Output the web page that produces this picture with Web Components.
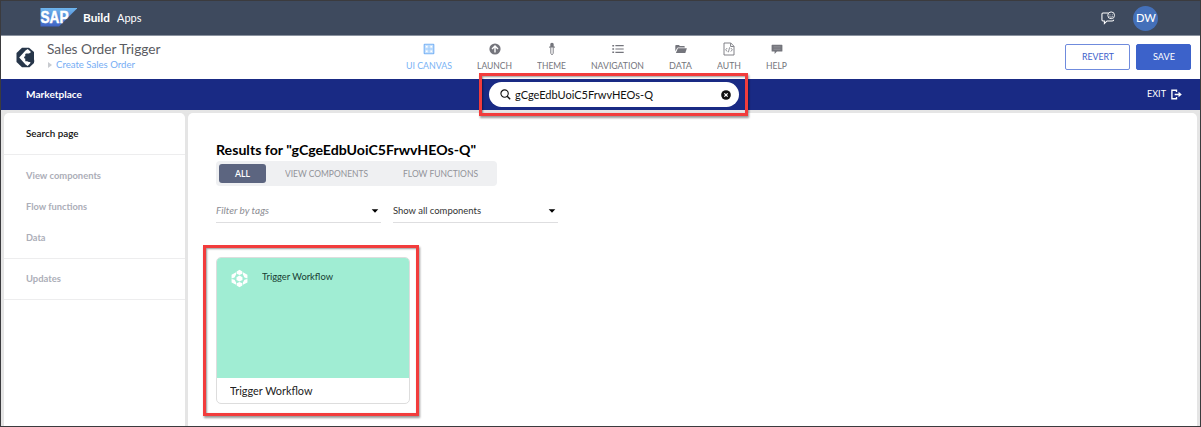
<!DOCTYPE html>
<html lang="en"><head><meta charset="utf-8"><title>Marketplace</title>
<style>html,body{margin:0;height:100%;overflow:hidden}body{font-family:Lato,"Open Sans",sans-serif;background:#3c3c40}</style></head>
<body><build-app></build-app>
<script>
const define=(name,html,setup)=>customElements.define(name,class extends HTMLElement{
  constructor(){super();const t=document.createElement('template');t.innerHTML=html;this.attachShadow({mode:'open'}).append(t.content.cloneNode(true));}
  connectedCallback(){if(setup)setup.call(this)}
});
// A label whose glyphs are widened so that the text spans the width "w".
define('fit-text',`<style>:host{display:block;white-space:nowrap;line-height:1.2;flex:none}span{display:inline-block;transform-origin:0 50%}</style><span><slot></slot></span>`,function(){
  const w=+this.getAttribute('w'),s=this.shadowRoot.querySelector('span');
  this.style.width=w+'px';s.style.transform='none';
  s.style.transform='scaleX('+w/s.getBoundingClientRect().width+')';
});
const ICONS={
 canvas:'<rect x="1.2" y="1.2" width="9.6" height="9.6" rx=".5" fill="#c9e2fd" stroke="#78b2f5" stroke-width="1.1"/><path d="M6 1.5v9M1.5 6h9" stroke="#9ccafa" stroke-width=".7"/><path d="M3 3h1.5v1.5H3zM7.5 3H9v1.5H7.5zM3 7.5h1.5V9H3zM7.5 7.5H9V9H7.5z" fill="#fff"/>',
 launch:'<circle cx="6" cy="6" r="5.6"/><path d="M6 9.6V3.4M3 6.1l3-3 3 3" fill="none" stroke="#fff" stroke-width="1.4"/>',
 theme:'<path d="M6 -.3c1.2 0 1.7.8 1.7 1.8v1.9h1.1v1.3H3.2V3.4h1.1V1.5C4.3.5 4.8-.3 6-.3z"/><path d="M4.8 4.7v5.6L6 11.9l1.2-1.6V4.7" fill="#fff" stroke="currentColor" stroke-width=".9"/>',
 list:'<path d="M.3 2h1.8v1.4H.3zM.3 5.3h1.8v1.4H.3zM.3 8.6h1.8V10H.3zM3.4 2.1h8.3v1.2H3.4zM3.4 5.4h8.3v1.2H3.4zM3.4 8.7h8.3v1.2H3.4z"/>',
 folder:'<path d="M.3 8.2V2.7c0-.5.3-.8.8-.8h2.8l1 1.1h4c.6 0 .9.3.9.8v.8H3.1c-.6 0-.9.2-1.1.7z"/><path d="M2.9 5.2h9L10.3 10H.9z"/>',
 code:'<path d="M1 0h6.8L11 3.3V12H1zM7.6.2v3.3h3.2" fill="none" stroke="currentColor" stroke-width=".9"/><path d="M4.2 5 2.7 6.8l1.5 1.8M7.8 5l1.5 1.8-1.5 1.8M6.6 4.3l-1.2 5" fill="none" stroke="currentColor" stroke-width=".8"/>',
 help:'<path d="M1.2 1.7h9.6c.4 0 .6.2.6.6v5.6c0 .4-.2.6-.6.6H5.9L3.6 11V8.5H1.2c-.4 0-.6-.2-.6-.6V2.3c0-.4.2-.6.6-.6z"/><path d="M2.5 3.9h7M2.5 6.2h7" stroke="#a3a4a9" stroke-width=".7"/>',
 search:'<circle cx="5" cy="5" r="4" fill="none" stroke="currentColor" stroke-width="1.2"/><path d="m7.8 7.8 3.3 3.3" stroke="currentColor" stroke-width="1.5"/>',
 clear:'<circle cx="6" cy="6" r="5.8"/><path d="m4 4 4 4m0-4L4 8" stroke="#fff" stroke-width="1.5"/>',
 exit:'<path d="M6 3.4V1.3H1v9.4h5V8.6" fill="none" stroke="currentColor" stroke-width="1.5"/><path d="M4 5.2h4.2V3L11.8 6 8.2 9V6.8H4z"/>',
 chat:'<path d="M6.2 1.7H1.7c-.6 0-.9.3-.9.9v5c0 .6.3.9.9.9h1.2v2.2l2.3-2.2h4.4c.9 0 1.3-.4 1.3-1" fill="none" stroke="currentColor" stroke-width=".9"/><circle cx="8.7" cy="3.7" r="2.9" fill="none" stroke="currentColor" stroke-width=".8"/><path d="M7.3 3h.8v.7h-.8zm2 0h.8v.7h-.8z"/><path d="M7.2 4.5c.8 1 2.2 1 3 0" fill="none" stroke="currentColor" stroke-width=".6"/>',
 caret:'<path d="M2.7 4.3h6.6L6 7.7z"/>',
 flower:'<path d="M6-.1 8 1v1.7l-2 .8-2-.8V1zM3.6 1.6v1.5L2.5 5.3.4 6V3.3zM8.4 1.6v1.5l1.1 2.2 2.1.7V3.3zM.4 6.4l2.1.5 1.1 2v1.5L.4 8.8zM11.6 6.4l-2.1.5-1.1 2v1.5l3.2-1.6zM6 8.5l2 .8V11l-2 1.1L4 11V9.3zM6 3.9l2.1 1.2v2L6 8.1 3.9 7.1v-2z"/>'
};
define('ui-icon','<style>:host{display:block;flex:none;width:12px;height:12px}svg{display:block;width:100%;height:100%;overflow:visible}</style><svg viewBox="0 0 12 12" fill="currentColor"></svg>',function(){this.shadowRoot.querySelector('svg').innerHTML=ICONS[this.getAttribute('name')]});
define('sap-logo',`<style>:host{display:block;width:38px;height:19px;margin-top:-2px}svg{display:block}text{font:bold 16px "Liberation Sans",sans-serif}</style>
<svg width="38" height="19"><defs><linearGradient id="g" x2="0" y2="1"><stop stop-color="#6eb6ee"/><stop offset="1" stop-color="#3e62c4"/></linearGradient></defs><path d="M1.5 0h37L20 18.5H1.5z" fill="url(#g)"/><text x="1.5" y="15" textLength="28" lengthAdjust="spacingAndGlyphs" fill="#fff" stroke="#fff" stroke-width=".5">SAP</text></svg>`);
define('top-bar',`<style>:host{display:flex;align-items:center;height:34px;background:#3e4a5e;color:#fff;padding:0 42px 0 38px;border-bottom:1px solid #8a929f}
.b{margin-left:6px;font-weight:700;font-size:11px}.a{margin-left:7px;font-size:11px}ui-icon{margin-left:auto;width:14px;height:14px}i{font:500 11.3px Lato,sans-serif;width:25px;height:25px;border-radius:50%;background:#4470b9;margin-left:18px;display:grid;place-items:center}</style>
<sap-logo></sap-logo><fit-text class="b" w="27">Build</fit-text><fit-text class="a" w="24.5">Apps</fit-text><ui-icon name="chat"></ui-icon><i><fit-text w="20">DW</fit-text></i>`);
customElements.define('nav-tab',class extends HTMLElement{constructor(){super();this.attachShadow({mode:'open'}).innerHTML=`<style>:host{display:flex;flex-direction:column;align-items:center;gap:4.5px;color:#74757c;font-size:9.2px}:host([active]){color:#78b2f5}</style><ui-icon name="${this.getAttribute('icon')}"></ui-icon><fit-text w="${this.getAttribute('w')}">${this.getAttribute('label')}</fit-text>`}});
define('push-button',`<style>:host{display:grid;place-items:center;box-sizing:border-box;height:26px;border:1px solid #6f8bdd;border-radius:2px;color:#3b62cb;font-size:8.8px;background:#fff}:host([primary]){background:#3c62ca;color:#fff;border-color:#3c62ca}</style><slot></slot>`);
define('tool-bar',`<style>:host{display:grid;grid-template-columns:405px 1fr auto;height:43px;background:#fff;padding:0 9px 0 0}
.p{display:flex;padding-left:15px;gap:11px;align-items:center}.n{padding-bottom:2px}.n>div{display:flex;align-items:center;gap:4px;margin-top:1.5px;color:#75adf4;font-size:9.5px}nav{display:flex;gap:25px;padding-top:7px}.a{display:flex;gap:6px;padding-top:8px}</style>
<div class="p"><svg width="20" height="21" viewBox="0 0 20 21"><path d="M6 .8h7L18 5v11l-4.5 4.2H6L.5 15V6z" fill="#27364a"/><path d="M9.5 3.6 3.2 10.5l6.3 6.9 2.2 1.6 3-3.2-2-1.6H9.3v-3L8 10.5l1.5-1.6V7.2l3.3-.3 2.2-2L11.7 2z" fill="#fff"/><path d="M9.2 12.8h9v2.3h-5.4zM8.4 9.6H18v2H8.4zM9.8 6.6H18v1.8H9z" fill="#27364a"/></svg><div class="n"><fit-text w="113.5" style="font-size:12.8px;color:#5b5c62">Sales Order Trigger</fit-text><div><svg width="5" height="6"><path d="m1 0 4 3-4 3z" fill="#c8cbd0"/></svg><fit-text w="79">Create Sales Order</fit-text></div></div></div>
<nav><nav-tab active icon="canvas" w="46" label="UI CANVAS"></nav-tab><nav-tab icon="launch" w="35" label="LAUNCH"></nav-tab><nav-tab icon="theme" w="29" label="THEME"></nav-tab><nav-tab icon="list" w="53" label="NAVIGATION"></nav-tab><nav-tab icon="folder" w="23" label="DATA"></nav-tab><nav-tab icon="code" w="24" label="AUTH"></nav-tab><nav-tab icon="help" w="21" label="HELP"></nav-tab></nav>
<div class="a"><push-button style="width:65px"><fit-text w="32">REVERT</fit-text></push-button><push-button primary style="width:55px"><fit-text w="22">SAVE</fit-text></push-button></div>`);
define('red-frame','<style>:host{position:absolute;box-sizing:border-box;border:3px solid #f23c3c;box-shadow:1px 2px 2px #0006,inset 1px 1px 2px #0006;pointer-events:none}</style>');
define('search-strip',`<style>:host{display:grid;grid-template-columns:488px 250px 1fr;align-items:center;height:31px;background:#192a84;color:#fff;position:relative}
.m{margin-left:25px;font-weight:700;font-size:9.6px}.s{box-sizing:border-box;height:25px;border-radius:13px;background:#fff;color:#111;display:flex;align-items:center;padding:0 8px 0 11px;font-size:11.5px}.s fit-text{margin-left:4px}.s ui-icon{width:10px;height:10px}.s ui-icon:first-child{width:11px;height:11px}.s ui-icon:last-child{margin-left:auto}.e{display:flex;justify-content:flex-end;align-items:center;gap:5px;padding-right:18px;font-size:9px}.e ui-icon{width:11px;height:11px}red-frame{left:478px;top:-6px;width:269px;height:43px;z-index:2}</style>
<fit-text class="m" w="56">Marketplace</fit-text><div class="s"><ui-icon name="search"></ui-icon><fit-text w="138">gCgeEdbUoiC5FrwvHEOs-Q</fit-text><ui-icon name="clear"></ui-icon></div><div class="e"><fit-text w="19">EXIT</fit-text><ui-icon name="exit"></ui-icon></div><red-frame></red-frame>`);
define('side-bar',`<style>:host{display:block;background:#fff;border-radius:5px 5px 0 0;font-size:9.5px;font-weight:700;color:#acaeb8}section{border-bottom:1.5px solid #ededee;padding:0 21.5px;box-sizing:border-box}section>*{height:31.3px;line-height:31.3px}.f{height:42px;padding-top:5px;color:#111;font-weight:600}.g{height:104px;padding-top:4.6px}.h{height:41px;padding-top:4px}</style>
<section class="f"><fit-text w="52.5">Search page</fit-text></section><section class="g"><fit-text w="75">View components</fit-text><fit-text w="61">Flow functions</fit-text><fit-text w="19.5">Data</fit-text></section><section class="h"><fit-text w="35">Updates</fit-text></section>`);
define('filter-select',`<style>:host{display:flex;align-items:center;justify-content:space-between;box-sizing:border-box;width:165px;height:23px;border-bottom:1px solid #dedee0;font-size:9.5px;color:#333}ui-icon{color:#000}</style><slot></slot><ui-icon name="caret"></ui-icon>`);
define('component-card',`<style>:host{display:block;box-sizing:border-box;width:194px;height:147px;border:1px solid #ddd;border-radius:5px;overflow:hidden;background:#fff}.t{box-sizing:border-box;height:120px;background:#a0edd3;display:flex;align-items:flex-start;padding:12px 14px;font-size:9.4px;color:#173c32}.t ui-icon{width:17px;height:17px;color:#fff;margin-right:14px}.t fit-text{margin-top:1px}.l{height:25px;padding-left:12.5px;display:flex;align-items:center;font-size:11px;color:#222}</style>
<div class="t"><ui-icon name="flower"></ui-icon><fit-text w="71">Trigger Workflow</fit-text></div><div class="l"><fit-text w="82.5">Trigger Workflow</fit-text></div>`);
define('results-pane',`<style>:host{display:block;background:#fff;border-radius:5px 5px 0 0;padding:29px 28px 0}.h{font-size:13.4px;font-weight:700;color:#000;height:16px}.tabs{display:flex;align-items:center;box-sizing:border-box;width:281px;height:25px;margin-top:3px;background:#eff0f2;border-radius:4px;padding:0 3px;font-size:9.2px;color:#929399}.on{display:grid;place-items:center;width:47px;height:19px;border-radius:3px;background:#5c6580;color:#fff;margin-right:19px;font-weight:600}.c{margin-right:35px}.f{display:flex;gap:11.5px;margin-top:14px}.w{position:relative;width:194px;margin-top:34px}red-frame{left:-13px;top:-12px;width:216px;height:171px}</style>
<fit-text class="h" w="260">Results for "gCgeEdbUoiC5FrwvHEOs-Q"</fit-text>
<div class="tabs"><div class="on"><fit-text w="15">ALL</fit-text></div><fit-text class="c" w="83">VIEW COMPONENTS</fit-text><fit-text w="75">FLOW FUNCTIONS</fit-text></div>
<div class="f"><filter-select><fit-text w="53" style="font-style:italic;color:#8c8d93">Filter by tags</fit-text></filter-select><filter-select><fit-text w="88">Show all components</fit-text></filter-select></div>
<div class="w"><component-card></component-card><red-frame></red-frame></div>`);
define('build-app',`<style>:host{display:flex;flex-direction:column;box-sizing:border-box;height:427px;border:1px solid #3b3b3e;background:#e5e5e5;overflow:hidden}main{display:grid;grid-template-columns:181px 1fr;gap:3px;flex:1;padding:3px 3px 0;min-height:0}</style>
<top-bar></top-bar><tool-bar></tool-bar><search-strip></search-strip><main><side-bar></side-bar><results-pane></results-pane></main>`);
</script></body></html>
